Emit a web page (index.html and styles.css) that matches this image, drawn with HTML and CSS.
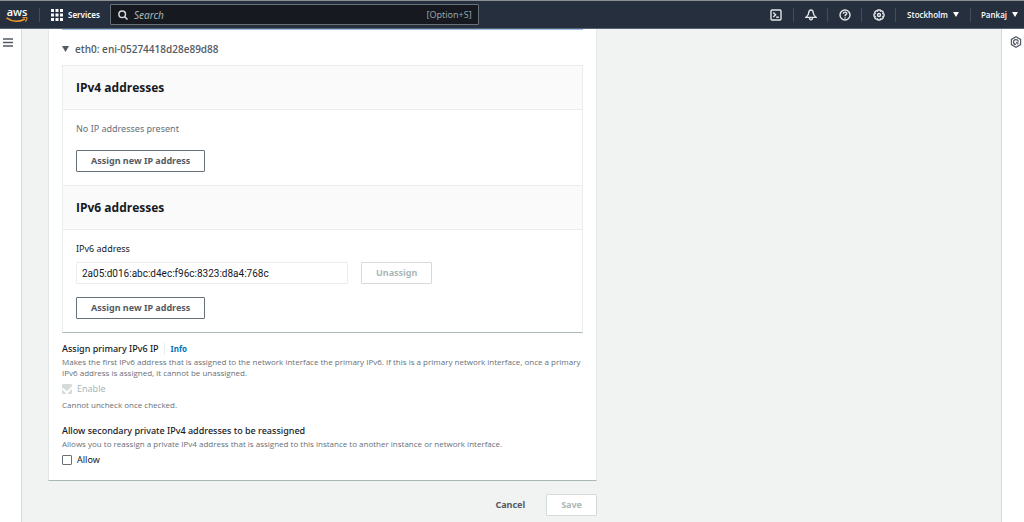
FILE: index.html
```html
<!DOCTYPE html>
<html lang="en">
<head>
<meta charset="utf-8">
<title>Manage IP addresses</title>
<link rel="stylesheet" href="styles.css">
</head>
<body>
<header class="topbar">
  <a class="logo" href="#" aria-label="AWS home"><span class="logo-text">aws</span>
    <svg class="logo-smile" viewBox="0 0 22 6"><path d="M0.5 0.8C6 5 14 5.2 19 2" fill="none" stroke="#f29a2e" stroke-width="1.5"/><path d="M16.500 .8c2-.7 4-.6 4.300-.1.3.6-.3 2.600-1.500 3.800" fill="none" stroke="#f29a2e" stroke-width="1.100"/></svg>
  </a>
  <button class="services" type="button">
    <svg width="12" height="12" viewBox="0 0 12 12" fill="#fff"><path d="M0 0h3v3H0zM4.500 0h3v3h-3zM9 0h3v3H9zM0 4.500h3v3H0zM4.500 4.500h3v3h-3zM9 4.500h3v3H9zM0 9h3v3H0zM4.500 9h3v3h-3zM9 9h3v3H9z"/></svg>
    Services
  </button>
  <label class="search">
    <svg width="10" height="10" viewBox="0 0 10 10" fill="none" stroke="#d5dbdb" stroke-width="1.500"><circle cx="4.200" cy="4.200" r="3.300"/><path d="M6.600 6.600 9.500 9.500"/></svg>
    <input type="text" placeholder="Search" aria-label="Search">
    <span class="shortcut">[Option+S]</span>
  </label>
  <nav class="tools">
    <button type="button" aria-label="CloudShell"><svg viewBox="0 0 12 12"><rect x="1" y="1" width="10" height="10" rx="1"/><path d="M3.300 3.500 5.600 5.700 3.300 7.900M6.200 8.300h2.600"/></svg></button>
    <button type="button" aria-label="Notifications"><svg viewBox="0 0 12 12"><path d="M6 1C4.400 1 3.800 2.300 3.700 4 3.600 5.800 2.600 7 1 8.400h10C9.400 7 8.400 5.800 8.300 4 8.200 2.300 7.600 1 6 1zM4.500 8.600c0 3 3 3 3 0"/></svg></button>
    <button type="button" aria-label="Help"><svg viewBox="0 0 12 12"><circle cx="6" cy="6" r="5"/><path d="M4.300 4.800C4.300 2.500 7.800 2.600 7.700 4.600 7.600 5.700 6 5.700 6 7.200M6 8.200v1.200"/></svg></button>
    <button type="button" aria-label="Settings"><svg viewBox="0 0 12 12"><path d="M4.900 1h2.200l.4 1.200 1.300-.5 1.500 1.500-.5 1.300 1.200.4v2.200l-1.200.4.5 1.300-1.500 1.500-1.300-.5-.4 1.200H4.900l-.4-1.200-1.300.5-1.500-1.500.5-1.300L1 7.100V4.900l1.200-.4-.5-1.300 1.500-1.500 1.300.5z"/><circle cx="6" cy="6" r="1.500"/></svg></button>
    <button type="button" class="region">Stockholm <svg class="caret" viewBox="0 0 6 5"><path d="M0 0h6L3 5z"/></svg></button>
    <button type="button" class="user">Pankaj <svg class="caret" viewBox="0 0 6 5"><path d="M0 0h6L3 5z"/></svg></button>
  </nav>
</header>
<div class="shell">
  <aside class="rail rail-left">
    <button type="button" aria-label="Open navigation"><svg width="10" height="9" viewBox="0 0 10 9" fill="none" stroke="#545b64" stroke-width="1.400"><path d="M0 1h10M0 4.500h10M0 8h10"/></svg></button>
  </aside>
  <main class="main">
    <div class="column">
      <section class="card">
        <div class="notice-edge"></div>
        <button class="expander" type="button" aria-expanded="true"><svg width="7" height="6" viewBox="0 0 7 6" fill="#545b64"><path d="M0 0h7L3.500 6z"/></svg>eth0: eni-05274418d28e89d88</button>
        <div class="panel">
          <h2 class="panel-head">IPv4 addresses</h2>
          <div class="panel-body">
            <p class="empty">No IP addresses present</p>
            <button class="btn" type="button">Assign new IP address</button>
          </div>
          <h2 class="panel-head ruled">IPv6 addresses</h2>
          <div class="panel-body">
            <label class="field-label" for="ip6">IPv6 address</label>
            <div class="field-row">
              <input class="field" id="ip6" type="text" value="2a05:d016:abc:d4ec:f96c:8323:d8a4:768c" readonly>
              <button class="btn" type="button" disabled>Unassign</button>
            </div>
            <button class="btn" type="button">Assign new IP address</button>
          </div>
        </div>
        <div class="group">
          <h3 class="title">Assign primary IPv6 IP<a class="info" href="#">Info</a></h3>
          <p class="hint">Makes the first IPv6 address that is assigned to the network interface the primary IPv6. If this is a primary network interface, once a primary IPv6 address is assigned, it cannot be unassigned.</p>
          <label class="check off"><input type="checkbox" checked disabled>Enable</label>
          <p class="hint">Cannot uncheck once checked.</p>
        </div>
        <div class="group">
          <h3 class="title">Allow secondary private IPv4 addresses to be reassigned</h3>
          <p class="hint">Allows you to reassign a private IPv4 address that is assigned to this instance to another instance or network interface.</p>
          <label class="check"><input type="checkbox">Allow</label>
        </div>
      </section>
      <div class="actions">
        <button class="btn link" type="button">Cancel</button>
        <button class="btn" type="button" disabled>Save</button>
      </div>
    </div>
  </main>
  <aside class="rail rail-right">
    <button type="button" aria-label="Open help panel"><svg width="12" height="12" viewBox="0 0 12 12" fill="none" stroke="#545b64" stroke-width="1.200"><path d="M6 .8 10.600 3.400v5.200L6 11.200 1.400 8.600V3.400z"/><path d="M8.300 5.800A2.400 2.400 0 1 0 6 8.400"/><path d="M5.700 5.400 9.600 7.200 7.700 7.600 7.200 9.200z" fill="#545b64" stroke="none"/></svg></button>
  </aside>
</div>
</body>
</html>
```
FILE: styles.css
```css
* { box-sizing: border-box; }
body {
  margin: 0;
  min-height: 100vh;
  display: flex;
  flex-direction: column;
  font-family: "Noto Sans", "Open Sans", sans-serif;
  font-size: 9px;
  line-height: 14px;
  color: #16191f;
  background: #f1f3f3;
}
button, input { font: inherit; color: inherit; }
button { margin: 0; padding: 0; border: 0; background: none; }
h2, h3, p { margin: 0; }
svg { display: block; flex: none; }

.topbar {
  display: flex;
  align-items: center;
  height: 29px;
  border-top: 1px solid #8d9096;
  border-bottom: 1px solid #586270;
  background: #262f3e;
  color: #fff;
}
.logo {
  display: flex;
  flex-direction: column;
  align-items: center;
  width: 39px;
  padding-right: 5px;
  color: #fff;
  text-decoration: none;
}
.logo-text { font: 600 11px/10px "Open Sans", sans-serif; }
.logo-smile { width: 22px; height: 6px; }
.services {
  display: flex;
  align-items: center;
  gap: 5px;
  width: 71px;
  height: 14px;
  padding-left: 11px;
  border-left: 1px solid #414d5c;
  font-size: 8px;
  font-weight: 600;
}
.search {
  display: flex;
  align-items: center;
  gap: 6px;
  width: 36%;
  height: 21px;
  padding: 0 6px 0 7px;
  border: 1px solid #687078;
  border-radius: 1px;
  background: #16191f;
}
.search input {
  flex: 1;
  min-width: 0;
  padding: 0;
  border: 0;
  outline: 0;
  background: none;
  font-size: 10px;
}
.search input::placeholder { color: #aab7b8; font-style: italic; opacity: 1; }
.shortcut { color: #95a5a6; }
.tools { display: flex; align-items: center; margin-left: auto; }
.tools button {
  display: flex;
  align-items: center;
  justify-content: center;
  gap: 5px;
  width: 34px;
  height: 14px;
  border-left: 1px solid #414d5c;
  font-size: 8px;
  font-weight: 600;
}
.tools button:first-child { border-left: 0; }
.tools svg { width: 12px; height: 12px; fill: none; stroke: #e3e6e8; stroke-width: 1.400; }
.tools .region { width: 75px; font-family: "Open Sans", sans-serif; }
.tools .user { width: 54px; padding-left: 4px; font-family: "Open Sans", sans-serif; }
.tools .caret { width: 6px; height: 5px; fill: #fff; stroke: none; }

.shell { display: flex; flex: 1; }
.rail { display: flex; align-items: flex-start; background: #fff; }
.rail-left { width: 22px; padding: 9px 0 0 3px; border-right: 1px solid #d5dbdb; }
.rail-right { width: 23px; padding: 7px 0 0 8px; border-left: 1px solid #d5dbdb; }
.main { flex: 1; padding: 0 26px 5px; }
.column { max-width: 549px; }
.card {
  padding: 0 13px 13px;
  border: 1px solid #e3e7e7;
  border-top: 0;
  border-bottom-color: #aab7b8;
  background: #fff;
}
.notice-edge { height: 1px; background: #9dbfe8; }
.expander {
  display: flex;
  align-items: center;
  gap: 6px;
  height: 14px;
  margin: 12px 0 9px;
  color: #545b64;
  font: 600 10px/14px "Open Sans", sans-serif;
}
.panel { border: 1px solid #eaeded; border-bottom-color: #aab7b8; }
.panel-head {
  padding: 13px;
  border-bottom: 1px solid #eaeded;
  background: #fafafa;
  font: 700 12px/17px "Open Sans", sans-serif;
}
.ruled { border-top: 1px solid #eaeded; }
.panel-body { padding: 12px 13px 13px; }
.empty { margin-bottom: 14px; color: #687078; }
.btn {
  height: 22px;
  padding: 0 14px;
  border: 1px solid #687078;
  border-radius: 1px;
  background: #fff;
  color: #545b64;
  font-weight: 700;
}
.btn:disabled { border-color: #d5dbdb; color: #aab7b8; }
.field-label { display: block; margin-bottom: 6px; }
.field-row { display: flex; gap: 13px; margin-bottom: 13px; }
.field {
  width: 272px;
  height: 22px;
  padding: 0 5px;
  border: 1px solid #eaeded;
  border-radius: 1px;
  font: 10px/14px Roboto, sans-serif;
}
.group { margin-top: 9px; }
.group + .group { margin-top: 14px; }
.title { display: flex; align-items: center; font-size: 9px; font-weight: 500; line-height: 14px; }
.info {
  margin-left: 5px;
  padding-left: 6px;
  border-left: 1px solid #eaeded;
  color: #0073bb;
  font-size: 8px;
  font-weight: 700;
  line-height: 12px;
  text-decoration: none;
}
.hint { color: #687078; font: 8px/11px "Open Sans", sans-serif; }
.check { display: flex; align-items: center; gap: 5px; width: fit-content; margin: 4px 0 3px; }
.group:last-child .check { margin-bottom: 0; }
.check input {
  appearance: none;
  width: 10px;
  height: 10px;
  margin: 0;
  border: 1px solid #687078;
  border-radius: 1px;
  background: #fff;
}
.off { color: #aab7b8; }
.check input:disabled { display: grid; place-items: start center; border-color: #d5dbdb; background: #d5dbdb; }
.check input:disabled::before {
  content: "";
  width: 7px;
  height: 5px;
  border: solid #fff;
  border-width: 0 0 2px 2px;
  transform: rotate(-45deg);
}
.actions { display: flex; justify-content: flex-end; gap: 6px; padding-top: 13px; }
.actions .link { border-color: transparent; background: none; }
```
